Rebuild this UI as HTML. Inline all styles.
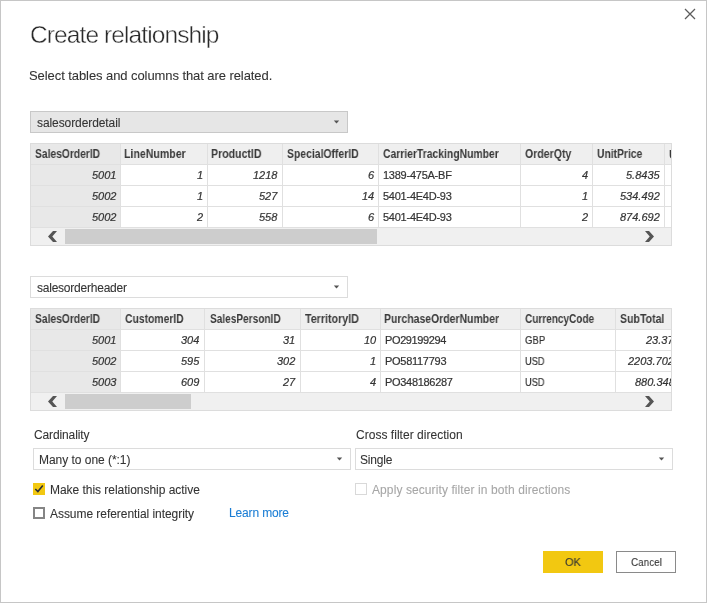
<!DOCTYPE html>
<html><head><meta charset="utf-8"><style>
html,body{margin:0;padding:0;width:707px;height:603px;overflow:hidden;background:#fff}
body{position:relative;font-family:"Liberation Sans",sans-serif;-webkit-font-smoothing:antialiased}
.a{position:absolute}
.t{position:absolute;white-space:nowrap;will-change:transform}
</style></head><body>
<div class="a" style="left:0px;top:0px;width:707px;height:603px;background:#fff;box-sizing:border-box;border:1px solid #c6c6c6;"></div>
<svg class="a" style="left:683px;top:7px" width="14" height="14" viewBox="0 0 14 14"><path d="M2 2L12 12M12 2L2 12" stroke="#5c5c5c" stroke-width="1.25" fill="none"/></svg>
<div class="a" style="left:30px;top:111px;width:318px;height:22px;background:#e6e6e6;box-sizing:border-box;border:1px solid #c8c8c8;"></div>
<svg class="a" style="left:333px;top:120px" width="8" height="5" viewBox="0 0 8 5"><path d="M0.8 0.6H6.2L3.5 3.6Z" fill="#555"/></svg>
<div class="a" style="left:30px;top:276px;width:318px;height:22px;background:#fff;box-sizing:border-box;border:1px solid #dcdcdc;"></div>
<svg class="a" style="left:333px;top:285px" width="8" height="5" viewBox="0 0 8 5"><path d="M0.8 0.6H6.2L3.5 3.6Z" fill="#555"/></svg>
<div class="a" style="left:33px;top:448px;width:318px;height:22px;background:#fff;box-sizing:border-box;border:1px solid #dcdcdc;"></div>
<svg class="a" style="left:336px;top:457px" width="8" height="5" viewBox="0 0 8 5"><path d="M0.8 0.6H6.2L3.5 3.6Z" fill="#555"/></svg>
<div class="a" style="left:355px;top:448px;width:318px;height:22px;background:#fff;box-sizing:border-box;border:1px solid #dcdcdc;"></div>
<svg class="a" style="left:658px;top:457px" width="8" height="5" viewBox="0 0 8 5"><path d="M0.8 0.6H6.2L3.5 3.6Z" fill="#555"/></svg>
<div class="a" style="left:30px;top:143px;width:642px;height:103px;background:#fff;box-sizing:border-box;border:1px solid #dcdcdc;"></div>
<div class="a" style="left:31px;top:144px;width:640px;height:20px;background:#efefef;"></div>
<div class="a" style="left:31px;top:144px;width:89px;height:83px;background:#e8e8e8;"></div>
<div class="a" style="left:31px;top:164px;width:640px;height:1px;background:#e0e0e0;"></div>
<div class="a" style="left:31px;top:185px;width:640px;height:1px;background:#e0e0e0;"></div>
<div class="a" style="left:31px;top:206px;width:640px;height:1px;background:#e0e0e0;"></div>
<div class="a" style="left:31px;top:227px;width:640px;height:1px;background:#e0e0e0;"></div>
<div class="a" style="left:120px;top:144px;width:1px;height:83px;background:#e0e0e0;"></div>
<div class="a" style="left:207px;top:144px;width:1px;height:83px;background:#e0e0e0;"></div>
<div class="a" style="left:282px;top:144px;width:1px;height:83px;background:#e0e0e0;"></div>
<div class="a" style="left:378px;top:144px;width:1px;height:83px;background:#e0e0e0;"></div>
<div class="a" style="left:520px;top:144px;width:1px;height:83px;background:#e0e0e0;"></div>
<div class="a" style="left:592px;top:144px;width:1px;height:83px;background:#e0e0e0;"></div>
<div class="a" style="left:664px;top:144px;width:1px;height:83px;background:#e0e0e0;"></div>
<div class="a" style="left:31px;top:228px;width:640px;height:17px;background:#f0f0f0;"></div>
<div class="a" style="left:65px;top:229px;width:312px;height:15px;background:#cdcdcd;"></div>
<svg class="a" style="left:0;top:0" width="707" height="603"><path d="M57 231.0L53 231.0L48 236.5L53 242.0L57 242.0L52.3 236.5Z" fill="#555"/><path d="M645 231.0L649 231.0L654 236.5L649 242.0L645 242.0L649.7 236.5Z" fill="#555"/></svg>
<div class="a" style="left:30px;top:308px;width:642px;height:103px;background:#fff;box-sizing:border-box;border:1px solid #dcdcdc;"></div>
<div class="a" style="left:31px;top:309px;width:640px;height:20px;background:#efefef;"></div>
<div class="a" style="left:31px;top:309px;width:89px;height:83px;background:#e8e8e8;"></div>
<div class="a" style="left:31px;top:329px;width:640px;height:1px;background:#e0e0e0;"></div>
<div class="a" style="left:31px;top:350px;width:640px;height:1px;background:#e0e0e0;"></div>
<div class="a" style="left:31px;top:371px;width:640px;height:1px;background:#e0e0e0;"></div>
<div class="a" style="left:31px;top:392px;width:640px;height:1px;background:#e0e0e0;"></div>
<div class="a" style="left:120px;top:309px;width:1px;height:83px;background:#e0e0e0;"></div>
<div class="a" style="left:204px;top:309px;width:1px;height:83px;background:#e0e0e0;"></div>
<div class="a" style="left:300px;top:309px;width:1px;height:83px;background:#e0e0e0;"></div>
<div class="a" style="left:380px;top:309px;width:1px;height:83px;background:#e0e0e0;"></div>
<div class="a" style="left:520px;top:309px;width:1px;height:83px;background:#e0e0e0;"></div>
<div class="a" style="left:615px;top:309px;width:1px;height:83px;background:#e0e0e0;"></div>
<div class="a" style="left:31px;top:393px;width:640px;height:17px;background:#f0f0f0;"></div>
<div class="a" style="left:65px;top:394px;width:126px;height:15px;background:#cdcdcd;"></div>
<svg class="a" style="left:0;top:0" width="707" height="603"><path d="M57 396.0L53 396.0L48 401.5L53 407.0L57 407.0L52.3 401.5Z" fill="#555"/><path d="M645 396.0L649 396.0L654 401.5L649 407.0L645 407.0L649.7 401.5Z" fill="#555"/></svg>
<div class="a" style="left:33px;top:483px;width:12px;height:12px;background:#f2c811;"></div>
<svg class="a" style="left:33px;top:483px" width="12" height="12" viewBox="0 0 12 12"><path d="M2.3 6L4.9 8.6L9.8 2.6" stroke="#2a2e38" stroke-width="1.6" fill="none"/></svg>
<div class="a" style="left:33px;top:507px;width:12px;height:12px;box-sizing:border-box;border:2px solid #858585"></div>
<div class="a" style="left:355px;top:483px;width:12px;height:12px;box-sizing:border-box;border:1px solid #d9d9d9"></div>
<div class="a" style="left:543px;top:551px;width:60px;height:22px;background:#f2c811;"></div>
<div class="a" style="left:616px;top:551px;width:60px;height:22px;background:#fff;box-sizing:border-box;border:1px solid #8a8a8a;"></div>
<div class="t" id="title" style="top:22.96px;font-size:24.50px;line-height:24.50px;color:#2a2a2a;letter-spacing:-0.900px;-webkit-text-stroke:0.4px #fff;left:30.10px;">Create relationship</div>
<div class="t" id="sub" style="top:68.84px;font-size:13.00px;line-height:13.00px;color:#333;letter-spacing:-0.075px;-webkit-text-stroke:0.08px #333;left:29.15px;">Select tables and columns that are related.</div>
<div class="t" id="dd1" style="top:116.84px;font-size:12.00px;line-height:12.00px;color:#333;letter-spacing:-0.084px;-webkit-text-stroke:0.08px #333;left:36.76px;">salesorderdetail</div>
<div class="t" id="dd2" style="top:281.84px;font-size:12.00px;line-height:12.00px;color:#333;letter-spacing:-0.228px;-webkit-text-stroke:0.08px #333;left:36.76px;">salesorderheader</div>
<div class="t" id="ah0" style="top:147.84px;font-size:12.00px;line-height:12.00px;color:#3a3a3a;letter-spacing:0.000px;font-weight:bold;-webkit-text-stroke:0.00px #3a3a3a;transform:scaleX(0.8567);transform-origin:left 0;left:35.00px;">SalesOrderID</div>
<div class="t" id="ah1" style="top:147.84px;font-size:12.00px;line-height:12.00px;color:#3a3a3a;letter-spacing:0.000px;font-weight:bold;-webkit-text-stroke:0.00px #3a3a3a;transform:scaleX(0.8820);transform-origin:left 0;left:124.34px;">LineNumber</div>
<div class="t" id="ah2" style="top:147.84px;font-size:12.00px;line-height:12.00px;color:#3a3a3a;letter-spacing:0.000px;font-weight:bold;-webkit-text-stroke:0.00px #3a3a3a;transform:scaleX(0.8802);transform-origin:left 0;left:211.10px;">ProductID</div>
<div class="t" id="ah3" style="top:147.84px;font-size:12.00px;line-height:12.00px;color:#3a3a3a;letter-spacing:0.000px;font-weight:bold;-webkit-text-stroke:0.00px #3a3a3a;transform:scaleX(0.8674);transform-origin:left 0;left:287.00px;">SpecialOfferID</div>
<div class="t" id="ah4" style="top:147.84px;font-size:12.00px;line-height:12.00px;color:#3a3a3a;letter-spacing:0.000px;font-weight:bold;-webkit-text-stroke:0.00px #3a3a3a;transform:scaleX(0.8629);transform-origin:left 0;left:383.05px;">CarrierTrackingNumber</div>
<div class="t" id="ah5" style="top:147.84px;font-size:12.00px;line-height:12.00px;color:#3a3a3a;letter-spacing:0.000px;font-weight:bold;-webkit-text-stroke:0.00px #3a3a3a;transform:scaleX(0.8785);transform-origin:left 0;left:525.24px;">OrderQty</div>
<div class="t" id="ah6" style="top:147.84px;font-size:12.00px;line-height:12.00px;color:#3a3a3a;letter-spacing:0.000px;font-weight:bold;-webkit-text-stroke:0.00px #3a3a3a;transform:scaleX(0.8592);transform-origin:left 0;left:597.24px;">UnitPrice</div>
<div class="a" style="left:0;top:0;width:671px;height:603px;overflow:hidden"><div class="t" id="ah7" style="top:148.54px;font-size:12.00px;line-height:12.00px;color:#3a3a3a;letter-spacing:0.000px;font-weight:bold;-webkit-text-stroke:0.00px #3a3a3a;left:669.00px;">U</div></div>
<div class="t" id="ad0_0" style="top:169.69px;font-size:11.00px;line-height:11.00px;color:#333;letter-spacing:0.000px;-webkit-text-stroke:0.20px #333;font-style:italic;right:590.67px;">5001</div>
<div class="t" id="ad0_1" style="top:190.69px;font-size:11.00px;line-height:11.00px;color:#333;letter-spacing:0.000px;-webkit-text-stroke:0.20px #333;font-style:italic;right:590.67px;">5002</div>
<div class="t" id="ad0_2" style="top:211.69px;font-size:11.00px;line-height:11.00px;color:#333;letter-spacing:0.000px;-webkit-text-stroke:0.20px #333;font-style:italic;right:590.67px;">5002</div>
<div class="t" id="ad1_0" style="top:169.69px;font-size:11.00px;line-height:11.00px;color:#333;letter-spacing:0.000px;-webkit-text-stroke:0.20px #333;font-style:italic;right:503.77px;">1</div>
<div class="t" id="ad1_1" style="top:190.69px;font-size:11.00px;line-height:11.00px;color:#333;letter-spacing:0.000px;-webkit-text-stroke:0.20px #333;font-style:italic;right:503.77px;">1</div>
<div class="t" id="ad1_2" style="top:211.69px;font-size:11.00px;line-height:11.00px;color:#333;letter-spacing:0.000px;-webkit-text-stroke:0.20px #333;font-style:italic;right:503.77px;">2</div>
<div class="t" id="ad2_0" style="top:169.69px;font-size:11.00px;line-height:11.00px;color:#333;letter-spacing:0.000px;-webkit-text-stroke:0.20px #333;font-style:italic;right:429.56px;">1218</div>
<div class="t" id="ad2_1" style="top:190.69px;font-size:11.00px;line-height:11.00px;color:#333;letter-spacing:0.000px;-webkit-text-stroke:0.20px #333;font-style:italic;right:429.56px;">527</div>
<div class="t" id="ad2_2" style="top:211.69px;font-size:11.00px;line-height:11.00px;color:#333;letter-spacing:0.000px;-webkit-text-stroke:0.20px #333;font-style:italic;right:429.56px;">558</div>
<div class="t" id="ad3_0" style="top:169.69px;font-size:11.00px;line-height:11.00px;color:#333;letter-spacing:0.000px;-webkit-text-stroke:0.20px #333;font-style:italic;right:333.00px;">6</div>
<div class="t" id="ad3_1" style="top:190.69px;font-size:11.00px;line-height:11.00px;color:#333;letter-spacing:0.000px;-webkit-text-stroke:0.20px #333;font-style:italic;right:333.00px;">14</div>
<div class="t" id="ad3_2" style="top:211.69px;font-size:11.00px;line-height:11.00px;color:#333;letter-spacing:0.000px;-webkit-text-stroke:0.20px #333;font-style:italic;right:333.00px;">6</div>
<div class="t" id="ad4_0" style="top:169.69px;font-size:11.00px;line-height:11.00px;color:#333;letter-spacing:-0.245px;-webkit-text-stroke:0.20px #333;left:383.05px;">1389-475A-BF</div>
<div class="t" id="ad4_1" style="top:190.69px;font-size:11.00px;line-height:11.00px;color:#333;letter-spacing:-0.245px;-webkit-text-stroke:0.20px #333;left:383.05px;">5401-4E4D-93</div>
<div class="t" id="ad4_2" style="top:211.69px;font-size:11.00px;line-height:11.00px;color:#333;letter-spacing:-0.245px;-webkit-text-stroke:0.20px #333;left:383.05px;">5401-4E4D-93</div>
<div class="t" id="ad5_0" style="top:170.39px;font-size:11.00px;line-height:11.00px;color:#333;letter-spacing:0.000px;-webkit-text-stroke:0.20px #333;font-style:italic;right:118.43px;">4</div>
<div class="t" id="ad5_1" style="top:190.69px;font-size:11.00px;line-height:11.00px;color:#333;letter-spacing:0.000px;-webkit-text-stroke:0.20px #333;font-style:italic;right:118.43px;">1</div>
<div class="t" id="ad5_2" style="top:211.69px;font-size:11.00px;line-height:11.00px;color:#333;letter-spacing:0.000px;-webkit-text-stroke:0.20px #333;font-style:italic;right:118.43px;">2</div>
<div class="t" id="ad6_0" style="top:169.69px;font-size:11.00px;line-height:11.00px;color:#333;letter-spacing:0.000px;-webkit-text-stroke:0.20px #333;font-style:italic;right:47.49px;">5.8435</div>
<div class="t" id="ad6_1" style="top:190.69px;font-size:11.00px;line-height:11.00px;color:#333;letter-spacing:0.000px;-webkit-text-stroke:0.20px #333;font-style:italic;right:47.49px;">534.492</div>
<div class="t" id="ad6_2" style="top:211.69px;font-size:11.00px;line-height:11.00px;color:#333;letter-spacing:0.000px;-webkit-text-stroke:0.20px #333;font-style:italic;right:47.49px;">874.692</div>
<div class="t" id="bh0" style="top:312.84px;font-size:12.00px;line-height:12.00px;color:#3a3a3a;letter-spacing:0.000px;font-weight:bold;-webkit-text-stroke:0.00px #3a3a3a;transform:scaleX(0.8567);transform-origin:left 0;left:35.00px;">SalesOrderID</div>
<div class="t" id="bh1" style="top:312.84px;font-size:12.00px;line-height:12.00px;color:#3a3a3a;letter-spacing:0.000px;font-weight:bold;-webkit-text-stroke:0.00px #3a3a3a;transform:scaleX(0.8630);transform-origin:left 0;left:125.24px;">CustomerID</div>
<div class="t" id="bh2" style="top:312.84px;font-size:12.00px;line-height:12.00px;color:#3a3a3a;letter-spacing:0.000px;font-weight:bold;-webkit-text-stroke:0.00px #3a3a3a;transform:scaleX(0.8401);transform-origin:left 0;left:209.57px;">SalesPersonID</div>
<div class="t" id="bh3" style="top:312.84px;font-size:12.00px;line-height:12.00px;color:#3a3a3a;letter-spacing:0.000px;font-weight:bold;-webkit-text-stroke:0.00px #3a3a3a;transform:scaleX(0.8917);transform-origin:left 0;left:305.38px;">TerritoryID</div>
<div class="t" id="bh4" style="top:312.84px;font-size:12.00px;line-height:12.00px;color:#3a3a3a;letter-spacing:0.000px;font-weight:bold;-webkit-text-stroke:0.00px #3a3a3a;transform:scaleX(0.8712);transform-origin:left 0;left:383.91px;">PurchaseOrderNumber</div>
<div class="t" id="bh5" style="top:312.84px;font-size:12.00px;line-height:12.00px;color:#3a3a3a;letter-spacing:0.000px;font-weight:bold;-webkit-text-stroke:0.00px #3a3a3a;transform:scaleX(0.8357);transform-origin:left 0;left:525.00px;">CurrencyCode</div>
<div class="t" id="bh6" style="top:312.84px;font-size:12.00px;line-height:12.00px;color:#3a3a3a;letter-spacing:0.000px;font-weight:bold;-webkit-text-stroke:0.00px #3a3a3a;transform:scaleX(0.8807);transform-origin:left 0;left:619.76px;">SubTotal</div>
<div class="t" id="bd0_0" style="top:334.69px;font-size:11.00px;line-height:11.00px;color:#333;letter-spacing:0.000px;-webkit-text-stroke:0.20px #333;font-style:italic;right:590.67px;">5001</div>
<div class="t" id="bd0_1" style="top:355.69px;font-size:11.00px;line-height:11.00px;color:#333;letter-spacing:0.000px;-webkit-text-stroke:0.20px #333;font-style:italic;right:590.67px;">5002</div>
<div class="t" id="bd0_2" style="top:376.69px;font-size:11.00px;line-height:11.00px;color:#333;letter-spacing:0.000px;-webkit-text-stroke:0.20px #333;font-style:italic;right:590.67px;">5003</div>
<div class="t" id="bd1_0" style="top:334.69px;font-size:11.00px;line-height:11.00px;color:#333;letter-spacing:0.000px;-webkit-text-stroke:0.20px #333;font-style:italic;right:507.82px;">304</div>
<div class="t" id="bd1_1" style="top:355.69px;font-size:11.00px;line-height:11.00px;color:#333;letter-spacing:0.000px;-webkit-text-stroke:0.20px #333;font-style:italic;right:507.82px;">595</div>
<div class="t" id="bd1_2" style="top:376.69px;font-size:11.00px;line-height:11.00px;color:#333;letter-spacing:0.000px;-webkit-text-stroke:0.20px #333;font-style:italic;right:507.82px;">609</div>
<div class="t" id="bd2_0" style="top:334.69px;font-size:11.00px;line-height:11.00px;color:#333;letter-spacing:0.000px;-webkit-text-stroke:0.20px #333;font-style:italic;right:411.64px;">31</div>
<div class="t" id="bd2_1" style="top:355.69px;font-size:11.00px;line-height:11.00px;color:#333;letter-spacing:0.000px;-webkit-text-stroke:0.20px #333;font-style:italic;right:411.64px;">302</div>
<div class="t" id="bd2_2" style="top:376.69px;font-size:11.00px;line-height:11.00px;color:#333;letter-spacing:0.000px;-webkit-text-stroke:0.20px #333;font-style:italic;right:411.64px;">27</div>
<div class="t" id="bd3_0" style="top:334.69px;font-size:11.00px;line-height:11.00px;color:#333;letter-spacing:0.000px;-webkit-text-stroke:0.20px #333;font-style:italic;right:331.24px;">10</div>
<div class="t" id="bd3_1" style="top:355.69px;font-size:11.00px;line-height:11.00px;color:#333;letter-spacing:0.000px;-webkit-text-stroke:0.20px #333;font-style:italic;right:331.24px;">1</div>
<div class="t" id="bd3_2" style="top:377.39px;font-size:11.00px;line-height:11.00px;color:#333;letter-spacing:0.000px;-webkit-text-stroke:0.20px #333;font-style:italic;right:331.24px;">4</div>
<div class="t" id="bd4_0" style="top:334.69px;font-size:11.00px;line-height:11.00px;color:#333;letter-spacing:-0.380px;-webkit-text-stroke:0.20px #333;left:385.37px;">PO29199294</div>
<div class="t" id="bd4_1" style="top:355.69px;font-size:11.00px;line-height:11.00px;color:#333;letter-spacing:-0.280px;-webkit-text-stroke:0.20px #333;left:385.37px;">PO58117793</div>
<div class="t" id="bd4_2" style="top:376.69px;font-size:11.00px;line-height:11.00px;color:#333;letter-spacing:-0.306px;-webkit-text-stroke:0.20px #333;left:385.37px;">PO348186287</div>
<div class="t" id="bd5_0" style="top:334.69px;font-size:11.00px;line-height:11.00px;color:#333;letter-spacing:0.000px;-webkit-text-stroke:0.20px #333;transform:scaleX(0.8700);transform-origin:left 0;left:525.00px;">GBP</div>
<div class="t" id="bd5_1" style="top:355.69px;font-size:11.00px;line-height:11.00px;color:#333;letter-spacing:0.000px;-webkit-text-stroke:0.20px #333;transform:scaleX(0.8400);transform-origin:left 0;left:525.00px;">USD</div>
<div class="t" id="bd5_2" style="top:376.69px;font-size:11.00px;line-height:11.00px;color:#333;letter-spacing:0.000px;-webkit-text-stroke:0.20px #333;transform:scaleX(0.8400);transform-origin:left 0;left:525.00px;">USD</div>
<div class="a" style="left:0;top:0;width:671px;height:603px;overflow:hidden"><div class="t" id="bd6_0" style="top:334.69px;font-size:11.00px;line-height:11.00px;color:#333;letter-spacing:0.000px;-webkit-text-stroke:0.20px #333;font-style:italic;left:646.05px;">23.3729</div></div>
<div class="a" style="left:0;top:0;width:671px;height:603px;overflow:hidden"><div class="t" id="bd6_1" style="top:355.69px;font-size:11.00px;line-height:11.00px;color:#333;letter-spacing:0.000px;-webkit-text-stroke:0.20px #333;font-style:italic;left:628.05px;">2203.7026</div></div>
<div class="a" style="left:0;top:0;width:671px;height:603px;overflow:hidden"><div class="t" id="bd6_2" style="top:376.69px;font-size:11.00px;line-height:11.00px;color:#333;letter-spacing:0.000px;-webkit-text-stroke:0.20px #333;font-style:italic;left:634.57px;">880.3484</div></div>
<div class="t" id="card" style="top:428.84px;font-size:12.00px;line-height:12.00px;color:#333;letter-spacing:-0.126px;-webkit-text-stroke:0.08px #333;left:33.76px;">Cardinality</div>
<div class="t" id="cross" style="top:428.84px;font-size:12.00px;line-height:12.00px;color:#333;letter-spacing:0.026px;-webkit-text-stroke:0.08px #333;left:355.76px;">Cross filter direction</div>
<div class="t" id="many" style="top:453.84px;font-size:12.00px;line-height:12.00px;color:#333;letter-spacing:-0.034px;-webkit-text-stroke:0.08px #333;left:39.10px;">Many to one (*:1)</div>
<div class="t" id="single" style="top:453.84px;font-size:12.00px;line-height:12.00px;color:#333;letter-spacing:-0.180px;-webkit-text-stroke:0.08px #333;left:360.10px;">Single</div>
<div class="t" id="active" style="top:484.35px;font-size:12.00px;line-height:12.00px;color:#333;letter-spacing:-0.032px;-webkit-text-stroke:0.08px #333;left:50.10px;">Make this relationship active</div>
<div class="t" id="apply" style="top:484.35px;font-size:12.00px;line-height:12.00px;color:#a6a6a6;letter-spacing:0.092px;-webkit-text-stroke:0.08px #a6a6a6;left:372.00px;">Apply security filter in both directions</div>
<div class="t" id="assume" style="top:507.86px;font-size:12.00px;line-height:12.00px;color:#333;letter-spacing:-0.050px;-webkit-text-stroke:0.08px #333;left:50.05px;">Assume referential integrity</div>
<div class="t" id="learn" style="top:507.33px;font-size:12.00px;line-height:12.00px;color:#1a7dd4;letter-spacing:-0.150px;-webkit-text-stroke:0.08px #1a7dd4;left:229.10px;">Learn more</div>
<div class="t" id="ok" style="top:556.18px;font-size:11.60px;line-height:11.60px;color:#333;letter-spacing:0.000px;-webkit-text-stroke:0.08px #333;transform:scaleX(0.9471);transform-origin:left 0;left:565.10px;">OK</div>
<div class="t" id="cancel" style="top:556.18px;font-size:11.60px;line-height:11.60px;color:#333;letter-spacing:0.000px;-webkit-text-stroke:0.08px #333;transform:scaleX(0.8581);transform-origin:left 0;left:630.96px;">Cancel</div>
</body></html>
